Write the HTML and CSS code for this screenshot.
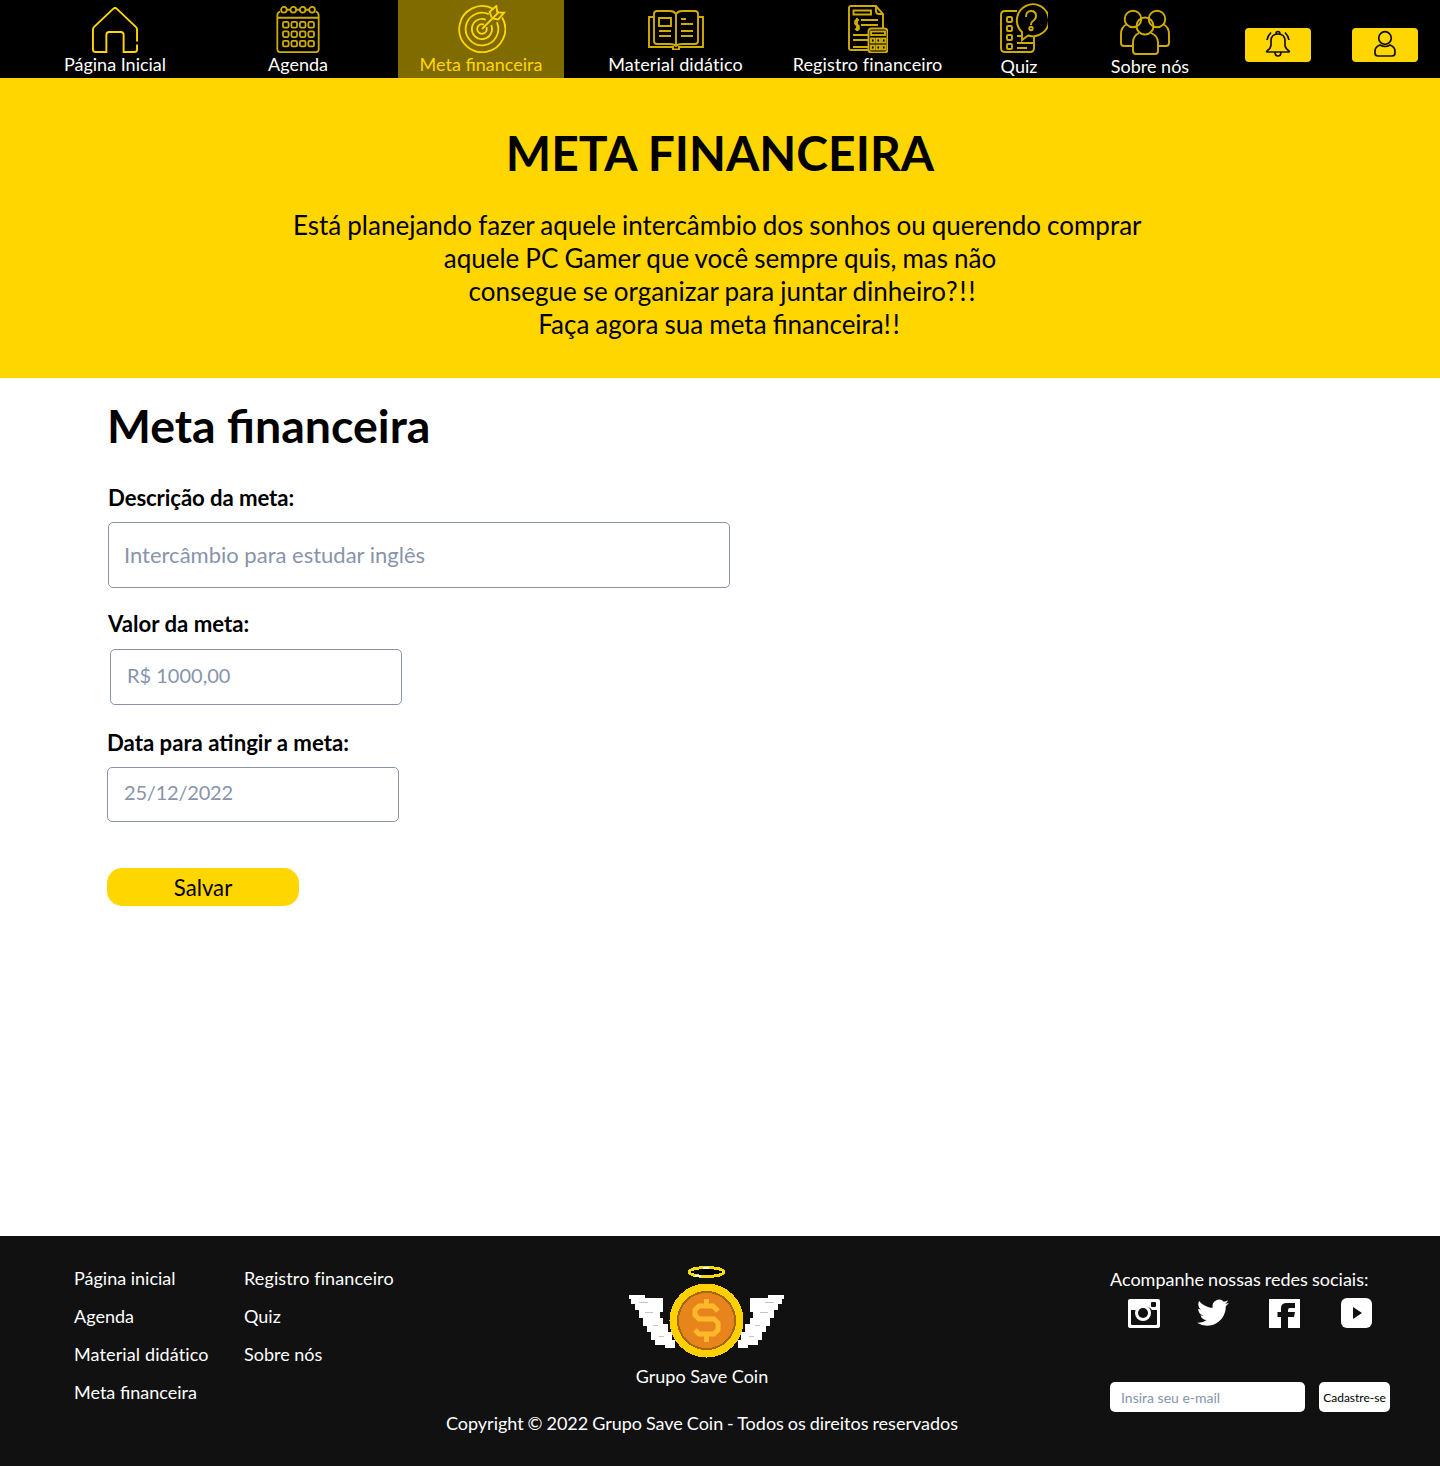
FILE: index.html
```html
<!DOCTYPE html>
<html lang="pt-BR">

<head>
    <meta charset="utf-8">
    <meta name="viewport" content="width=device-width, initial-scale=1.0">
    <title>Meta financeira</title>
    <link rel="stylesheet" href="styles.css">
</head>

<body>
    <header class="topo">
        <a class="item item-inicio">
            <svg class="icone" width="48" height="48" viewBox="0 0 48 48">
                <path d="M47 36V24Q47 22 46 21L26 2Q24 0 22 2L2 21Q1 22 1 24V44Q1 47 4 47H15V29Q15 26 18 26H30Q33 26 33 29V47H44Q47 47 47 44V39" />
            </svg>
            <span>Página Inicial</span>
        </a>
        <a class="item item-agenda">
            <svg class="icone fino" width="46" height="50" viewBox="0 0 46 50">
                <path d="M4 6Q1 7 1 10V46Q1 49 4 49H42Q45 49 45 46V10Q45 7 42 6M1 12.500H45M11 4H15M21 4H25M31 4H35" />
                <circle cx="8" cy="4" r="3" /><circle cx="18" cy="4" r="3" /><circle cx="28" cy="4" r="3" /><circle cx="38" cy="4" r="3" />
                <rect x="7" y="17" width="6" height="6" rx="1.500" /><rect x="16" y="17" width="6" height="6" rx="1.500" /><rect x="25" y="17" width="6" height="6" rx="1.500" /><rect x="34" y="17" width="6" height="6" rx="1.500" />
                <rect x="7" y="27" width="6" height="6" rx="1.500" /><rect x="16" y="27" width="6" height="6" rx="1.500" /><rect x="25" y="27" width="6" height="6" rx="1.500" /><rect x="34" y="27" width="6" height="6" rx="1.500" />
                <rect x="7" y="37" width="6" height="6" rx="1.500" /><rect x="16" y="37" width="6" height="6" rx="1.500" /><rect x="25" y="37" width="6" height="6" rx="1.500" /><rect x="34" y="37" width="6" height="6" rx="1.500" />
            </svg>
            <span>Agenda</span>
        </a>
        <a class="item item-meta ativo">
            <svg class="icone fino" width="50" height="50" viewBox="0 0 50 50">
                <path d="M38 4.200A24 24 0 1 0 47 13M33 9.500A17 17 0 1 0 41.500 18M30 15.300A10.500 10.500 0 1 0 35.700 21M28 20.400A5 5 0 1 0 30.600 23" />
                <path d="M26 25 44 7M36 13 34 7 41 1 42 8 49 8 43 15 37 14" />
            </svg>
            <span>Meta financeira</span>
        </a>
        <a class="item item-material">
            <svg class="icone fino" width="56" height="40" viewBox="0 0 56 40">
                <path d="M6 7H1V37H25V39.500H31V37H55V7H50" />
                <path d="M28 36Q26 34 22 34H9Q6 34 6 31V4Q6 1 9 1H22Q26 1 28 4Q30 1 34 1H47Q50 1 50 4V31Q50 34 47 34H34Q30 34 28 36ZM28 4V36" />
                <path d="M11 8H23V16H11ZM11 21H23M11 26H23M33 9H38M33 14H45M33 21H45M33 26H45" />
            </svg>
            <span>Material didático</span>
        </a>
        <a class="item item-registro">
            <svg class="icone fino" width="40" height="48" viewBox="0 0 40 48">
                <path d="M20 45H3Q1 45 1 43V3Q1 1 3 1H28L35 9V23M28 1V6Q28 9 31 9H35M5.500 5.500H23V9.500H5.500ZM13 15H30M13 20H30M5 30H20M5 35H20M5 42H20" />
                <path d="M11 15Q7 14 7 17T9 20 11 23 7 24M9 13V26" />
                <rect x="20.500" y="23.500" width="19" height="24" rx="3" /><rect x="23" y="26.500" width="14" height="3.500" />
                <rect x="23" y="33.500" width="3.500" height="4" /><rect x="28.500" y="33.500" width="3.500" height="4" /><rect x="34" y="33.500" width="3.500" height="4" />
                <rect x="23" y="40.500" width="3.500" height="4" /><rect x="28.500" y="40.500" width="3.500" height="4" /><rect x="34" y="40.500" width="3.500" height="4" />
            </svg>
            <span>Registro financeiro</span>
        </a>
        <a class="item item-quiz">
            <svg class="icone fino" width="48" height="50" viewBox="0 0 48 50">
                <path d="M17 8H5Q1 8 1 12V45Q1 49 5 49H30Q34 49 34 45V33" />
                <path d="M22 29V37L28 32.500A16 16 0 1 0 22 29Z" />
                <path d="M26 14Q26 8 31 8 36 8 36 13 36 16 33 18 31 19 31 22" />
                <circle cx="31" cy="25.500" r="1.700" />
                <rect x="7" y="14" width="5" height="5" rx="1" /><rect x="7" y="23" width="5" height="5" rx="1" /><rect x="7" y="32" width="5" height="5" rx="1" /><rect x="7" y="41" width="5" height="5" rx="1" />
                <path d="M17 33H21M17 40H33M17 45H27" />
            </svg>
            <span>Quiz</span>
        </a>
        <a class="item item-sobre">
            <svg class="icone fino" width="50" height="46" viewBox="0 0 50 46">
                <circle cx="13" cy="10" r="8.300" /><circle cx="37" cy="10" r="8.300" /><circle cx="25" cy="17" r="8.500" />
                <path d="M7 15Q1 18 1 25V34Q1 37 4 37H13M43 15Q49 18 49 25V34Q49 37 46 37H38" />
                <path d="M19 24Q13 27 13 33V42Q13 45 16 45H35Q38 45 38 42V33Q38 27 31 24" />
            </svg>
            <span>Sobre nós</span>
        </a>
        <button class="botao-topo botao-sino">
            <svg class="icone-escuro" width="26" height="28" viewBox="0 0 26 28">
                <path d="M13 4Q6 4 6 11V15Q6 18 2 21Q1 22 3 22H23Q25 22 24 21Q20 18 20 15V11Q20 4 13 4ZM11 4Q11 1.500 13 1.500T15 4M10 22Q10 26 13 26T16 22M2 10Q2.500 6 6 2.500M24 10Q23.500 6 20 2.500" />
            </svg>
        </button>
        <button class="botao-topo">
            <svg class="icone-escuro" width="22" height="28" viewBox="0 0 22 28">
                <circle cx="11" cy="8" r="6.300" />
                <path d="M6 15Q1 17 1 21V23Q1 26 4 26H18Q21 26 21 23V21Q21 17 16 15Q11 18 6 15Z" />
            </svg>
        </button>
    </header>

    <section class="chamada">
        <h1>META FINANCEIRA</h1>
        <p>Está planejando fazer aquele intercâmbio dos sonhos ou querendo comprar&nbsp;<br>
            aquele PC Gamer que você sempre quis, mas não<br>
            &nbsp;consegue se organizar para juntar dinheiro<span class="exclama">?!!</span><br>
            Faça agora sua meta financeira<span class="exclama">!!</span></p>
    </section>

    <main class="conteudo">
        <h2>Meta financeira</h2>
        <form class="formulario">
            <label class="rotulo rotulo-descricao" for="descricao">Descrição da meta:</label>
            <input class="campo campo-descricao" id="descricao" type="text" placeholder="Intercâmbio para estudar inglês">
            <label class="rotulo rotulo-valor" for="valor">Valor da meta:</label>
            <input class="campo campo-valor" id="valor" type="text" placeholder="R$ 1000,00">
            <label class="rotulo rotulo-data" for="data">Data para atingir a meta:</label>
            <input class="campo campo-data" id="data" type="text" placeholder="25/12/2022">
            <button class="salvar" type="button">Salvar</button>
        </form>
    </main>

    <footer class="rodape">
        <ul class="links">
            <li>Página inicial</li>
            <li>Agenda</li>
            <li class="longo">Material didático</li>
            <li>Meta financeira</li>
        </ul>
        <ul class="links links-dois">
            <li class="longo">Registro financeiro</li>
            <li>Quiz</li>
            <li>Sobre nós</li>
        </ul>
        <div class="marca">
            <svg class="logo" width="164" height="100" viewBox="0 0 164 100" shape-rendering="crispEdges">
                <ellipse cx="81.500" cy="10" rx="17.500" ry="4.500" fill="#000" stroke="#f2dc0c" stroke-width="3" />
                <path fill="#fff" d="M78 5H84V6.500H78ZM70 13H76V14.500H70Z" />
                <g id="ala">
                    <path fill="#fff" d="M4 33H20V36H38V50H35V56H38V62H43V70H47V78H50V86H40V83H30V78H26V70H22V64H18V56H14V48H10V42H6V37H4Z" />
                    <path fill="#c4c4c4" d="M14 40H23V41H14ZM20 50H28V51H20ZM28 63H33V64H28ZM34 74H39V75H34Z" />
                </g>
                <use href="#ala" transform="matrix(-1 0 0 1 163 0)" />
                <circle cx="81.500" cy="58.500" r="37" fill="#ffd000" />
                <circle cx="81.500" cy="58.500" r="28.500" fill="#e8841c" stroke="#a8660c" stroke-width="2" />
                <path fill="none" stroke="#fdb92a" stroke-width="5" shape-rendering="auto" d="M93 49 88 44H74L70 48V53L74 57H89L93 61V68L89 72H74L70 68M81.500 37V44M81.500 72V80" />
            </svg>
            <p class="marca-nome">Grupo Save Coin</p>
            <p class="copyright">Copyright © 2022 Grupo Save Coin - Todos os direitos reservados</p>
        </div>
        <div class="redes">
            <p class="redes-titulo">Acompanhe nossas redes sociais:</p>
            <div class="sociais">
                <svg class="social-insta" width="32" height="29" viewBox="0 0 32 29">
                    <rect width="32" height="29" rx="2" fill="#fff" />
                    <path fill="#111" d="M3 11H8A10 10 0 0 1 24 11H29V25Q29 26 28 26H4Q3 26 3 25Z" />
                    <circle cx="15" cy="14" r="8" fill="#fff" /><circle cx="15" cy="14" r="5" fill="#111" />
                    <rect x="23" y="3" width="5" height="5" rx="1" fill="#111" />
                </svg>
                <svg class="social-twitter" width="32" height="30" viewBox="0 0 24 22.500">
                    <path fill="#fff" d="M23.953 3.570a10 10 0 0 1-2.825.775 4.958 4.958 0 0 0 2.163-2.723c-.951.555-2.005.959-3.127 1.184a4.920 4.920 0 0 0-8.384 4.482C7.690 7.095 4.067 5.130 1.640 2.162a4.822 4.822 0 0 0-.666 2.475c0 1.710.870 3.213 2.188 4.096a4.904 4.904 0 0 1-2.228-.616v.060a4.923 4.923 0 0 0 3.946 4.827 4.996 4.996 0 0 1-2.212.085 4.936 4.936 0 0 0 4.604 3.417 9.867 9.867 0 0 1-6.102 2.105c-.390 0-.779-.023-1.170-.067a13.995 13.995 0 0 0 7.557 2.209c9.053 0 13.998-7.496 13.998-13.985 0-.210 0-.420-.015-.630A9.935 9.935 0 0 0 24 3.590z" />
                </svg>
                <svg class="social-face" width="31" height="29" viewBox="0 0 31 29">
                    <rect width="31" height="29" fill="#fff" />
                    <path fill="#111" d="M12 29V18H8.500V13H12V9Q12 4 18 4H26V9H21Q19 9 19 11V13H26L25 18H19V29Z" />
                </svg>
                <svg class="social-you" width="31" height="30" viewBox="0 0 31 30">
                    <rect width="31" height="30" rx="6" fill="#fff" />
                    <path fill="#111" d="M12 9 21 15 12 21Z" />
                </svg>
            </div>
            <form class="novidades">
                <input class="email" type="text" placeholder="Insira seu e-mail">
                <button class="cadastro" type="button">Cadastre-se</button>
            </form>
        </div>
    </footer>
</body>

</html>
```

FILE: styles.css
```css
* {
    box-sizing: border-box;
}

body {
    margin: 0;
    font-family: Lato, "Liberation Sans", sans-serif;
    color: #000;
    background-color: #fff;
}

h1,
h2,
p,
ul {
    margin: 0;
    padding: 0;
}

ul {
    list-style: none;
}

/* topo */
.topo {
    height: 78px;
    background-color: #000;
    display: flex;
}

.item {
    height: 78px;
    display: flex;
    flex-direction: column;
    align-items: center;
    color: #fff;
    font-size: 18px;
    line-height: 22px;
    white-space: nowrap;
}

.item span {
    margin-top: auto;
    padding-bottom: 3px;
}

.icone {
    display: block;
    margin-top: 7px;
    fill: none;
    stroke: #ffd600;
    stroke-width: 2;
}

.fino {
    stroke: #cfad00;
    stroke-width: 1.900;
}

.item-inicio {
    width: 230px;
}

.item-agenda {
    width: 136px;
    margin-right: 32px;
}

.item-agenda .icone {
    margin-top: 6px;
}

.item-meta {
    width: 166px;
}

.item-meta .icone {
    margin-top: 5px;
}

.ativo {
    background-color: #806b00;
    color: #ffd600;
}

.ativo .fino {
    stroke: #ffd600;
}

.item-material {
    width: 223px;
    letter-spacing: .12px;
}

.item-material .icone {
    margin-top: 10px;
}

.item-registro {
    width: 161px;
    letter-spacing: .12px;
}

.item-registro .icone {
    margin-top: 5px;
}

.item-quiz {
    width: 142px;
}

.item-quiz .icone {
    margin-top: 3px;
    margin-left: 10px;
}

.item-quiz span,
.item-sobre span {
    padding-bottom: 1px;
}

.item-sobre {
    width: 120px;
}

.item-sobre .icone {
    margin-top: 9px;
    margin-left: -10px;
}

.botao-topo {
    width: 66px;
    height: 34px;
    margin-top: 28px;
    margin-left: 41px;
    padding: 0;
    border: 0;
    border-radius: 4px;
    background-color: #ffd600;
    display: flex;
    justify-content: center;
    align-items: flex-start;
}

.botao-sino {
    margin-left: 35px;
}

.icone-escuro {
    display: block;
    margin-top: 2px;
    fill: none;
    stroke: #111;
    stroke-width: 1.700;
}

/* chamada */
.chamada {
    height: 300px;
    padding-top: 47px;
    background-color: #ffd600;
    text-align: center;
}

.chamada h1 {
    font-size: 48px;
    line-height: 56px;
    font-weight: 700;
}

.chamada p {
    margin-top: 28px;
    font-size: 26px;
    line-height: 33px;
    word-spacing: -.6px;
}

.exclama {
    letter-spacing: 2px;
}

/* formulario */
.conteudo {
    height: 858px;
    padding: 18px 0 0 107px;
}

.conteudo h2 {
    font-size: 46.500px;
    line-height: 58px;
    font-weight: 700;
}

.formulario {
    display: flex;
    flex-direction: column;
    align-items: flex-start;
}

.rotulo {
    font-size: 22.200px;
    line-height: 26px;
    font-weight: 700;
}

.rotulo-descricao {
    margin: 31px 0 0 1px;
    letter-spacing: -.1px;
}

.rotulo-valor {
    margin: 23px 0 0 1px;
}

.rotulo-data {
    margin-top: 25px;
}

.campo {
    border: 1px solid #8794ab;
    border-radius: 5px;
    font-family: inherit;
    background-color: #fff;
}

.campo::placeholder,
.email::placeholder {
    color: #8794ab;
    opacity: 1;
}

.campo-descricao {
    width: 622px;
    height: 66px;
    margin: 11px 0 0 1px;
    padding: 0 15px 2px;
    font-size: 22px;
}

.campo-valor {
    width: 292px;
    height: 56px;
    margin: 12px 0 0 3px;
    padding: 0 16px 4px;
    font-size: 20px;
}

.campo-data {
    width: 292px;
    height: 55px;
    margin-top: 11px;
    padding: 0 16px 6px;
    font-size: 20px;
    letter-spacing: -.2px;
}

.salvar {
    width: 192px;
    height: 38px;
    margin-top: 46px;
    padding: 0;
    border: 0;
    border-radius: 15px;
    background-color: #ffd600;
    font-family: inherit;
    font-size: 22.200px;
    color: #000;
}

/* rodape */
.rodape {
    height: 230px;
    background-color: #111;
    color: #fff;
    display: flex;
    font-size: 18px;
}

.links {
    width: 170px;
    margin-left: 74px;
    padding-top: 31px;
}

.links li {
    line-height: 22px;
    margin-bottom: 16px;
    white-space: nowrap;
}

.links .longo {
    letter-spacing: .12px;
}

.links-dois {
    margin-left: 0;
}

.marca {
    width: 576px;
    padding-top: 26px;
    text-align: center;
}

.logo {
    display: block;
    margin-left: 211px;
}

.marca-nome {
    margin-top: 3px;
    line-height: 22px;
}

.copyright {
    margin-top: 25px;
    line-height: 22px;
    word-spacing: -.7px;
}

.redes {
    width: 280px;
    margin-left: 120px;
    padding-top: 32px;
}

.redes-titulo {
    line-height: 22px;
    white-space: nowrap;
    word-spacing: -.5px;
}

.sociais {
    display: flex;
    align-items: flex-start;
    margin-top: 8px;
    padding-left: 18px;
}

.sociais svg {
    display: block;
}

.social-insta {
    margin-top: 1px;
}

.social-twitter {
    margin-left: 37px;
}

.social-face {
    margin-left: 40px;
    margin-top: 1px;
}

.social-you {
    margin-left: 41px;
}

.novidades {
    display: flex;
    margin-top: 54px;
}

.email {
    width: 195px;
    height: 30px;
    padding: 0 11px;
    border: 0;
    border-radius: 5px;
    background-color: #fff;
    font-family: inherit;
    font-size: 14px;
}

.cadastro {
    width: 72px;
    height: 30px;
    margin-left: 14px;
    padding: 0;
    border: 0;
    border-radius: 5px;
    background-color: #fff;
    font-family: inherit;
    font-size: 12px;
    color: #000;
}
```
